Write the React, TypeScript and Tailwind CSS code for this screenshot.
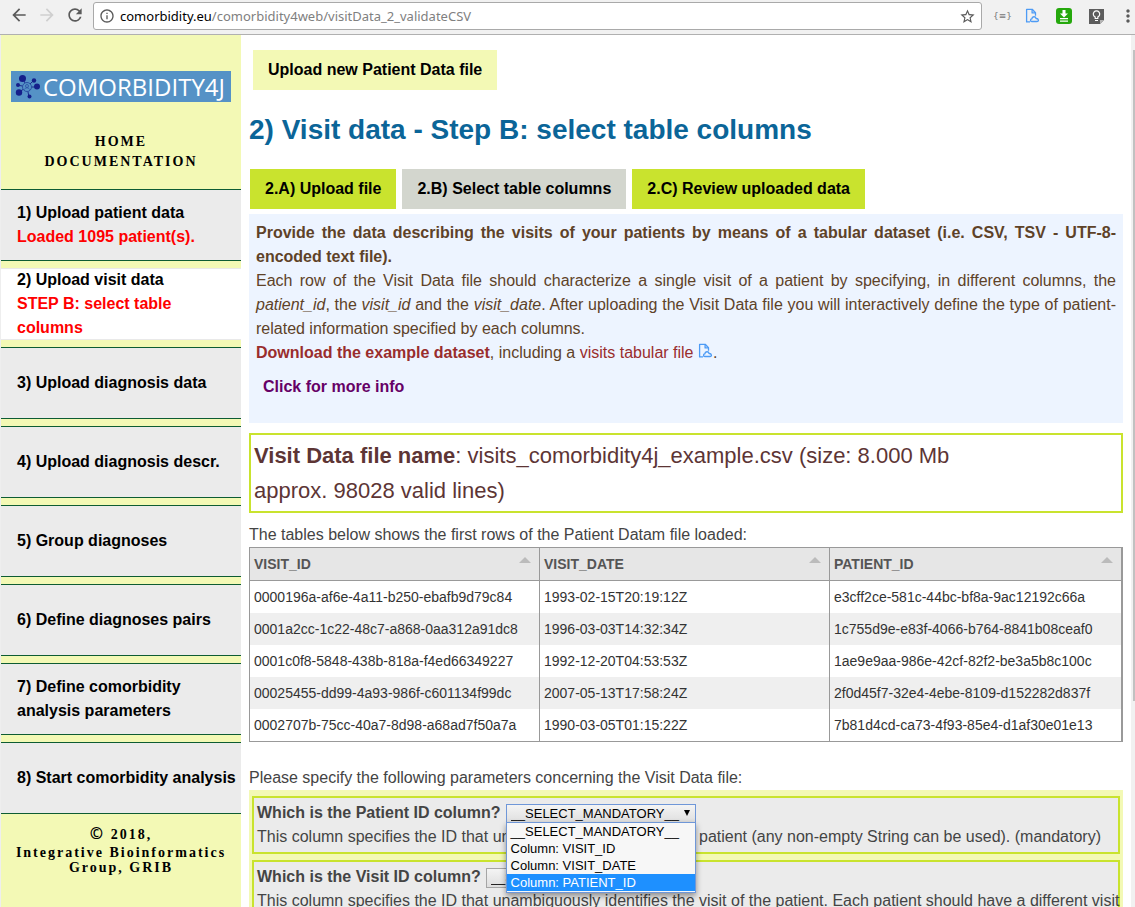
import React from "react";
import {
  MdArrowBack,
  MdArrowForward,
  MdInfoOutline,
  MdMoreVert,
  MdRefresh,
  MdStarBorder,
} from "react-icons/md";

const steps = [
  { title: "1) Upload patient data", status: "Loaded 1095 patient(s)." },
  { title: "2) Upload visit data", status: "STEP B: select table columns", active: true },
  { title: "3) Upload diagnosis data" },
  { title: "4) Upload diagnosis descr." },
  { title: "5) Group diagnoses" },
  { title: "6) Define diagnoses pairs" },
  { title: "7) Define comorbidity analysis parameters" },
  { title: "8) Start comorbidity analysis" },
];

const columns = ["VISIT_ID", "VISIT_DATE", "PATIENT_ID"];

const rows = [
  ["0000196a-af6e-4a11-b250-ebafb9d79c84", "1993-02-15T20:19:12Z", "e3cff2ce-581c-44bc-bf8a-9ac12192c66a"],
  ["0001a2cc-1c22-48c7-a868-0aa312a91dc8", "1996-03-03T14:32:34Z", "1c755d9e-e83f-4066-b764-8841b08ceaf0"],
  ["0001c0f8-5848-438b-818a-f4ed66349227", "1992-12-20T04:53:53Z", "1ae9e9aa-986e-42cf-82f2-be3a5b8c100c"],
  ["00025455-dd99-4a93-986f-c601134f99dc", "2007-05-13T17:58:24Z", "2f0d45f7-32e4-4ebe-8109-d152282d837f"],
  ["0002707b-75cc-40a7-8d98-a68ad7f50a7a", "1990-03-05T01:15:22Z", "7b81d4cd-ca73-4f93-85e4-d1af30e01e13"],
];

const options = ["__SELECT_MANDATORY__", "Column: VISIT_ID", "Column: VISIT_DATE", "Column: PATIENT_ID"];

function FileCloudIcon({ className }: { className: string }) {
  return (
    <svg viewBox="0 0 15 16" className={className} fill="none" stroke="#4d9bf5" strokeWidth="1.3" strokeLinejoin="round" aria-hidden="true">
      <path d="M5 13.900H1.600V1.300h5.600l3.300 3.400v3" />
      <path d="M7.100 1.500v3.400h3.300" />
      <path d="M6.800 13.500a1.300 1.300 0 0 1 0-2.600c.300-2.800 3.800-2.800 4.300-.400 2.900.200 3 3 .900 3z" />
    </svg>
  );
}

function MoleculeIcon() {
  return (
    <svg viewBox="0 0 26 26" className="h-[26px] w-[26px] shrink-0" aria-hidden="true">
      <g stroke="#1b2d8c" strokeWidth="1">
        <path d="M12 13 8 5M12 13l6-6M12 13l12 0M12 13 14 23M12 13 4 18M12 13 2.500 11" />
      </g>
      <circle cx="12" cy="13" r="4.500" fill="#5592c6" stroke="#2a4fa3" />
      <circle cx="12" cy="12" r="1.500" fill="none" stroke="#2a4fa3" strokeWidth="0.800" />
      <path d="M9.500 15.500c.5-2.200 4.500-2.200 5 0" fill="none" stroke="#2a4fa3" strokeWidth="0.800" />
      <g fill="#151f8a">
        <circle cx="7.500" cy="4.500" r="3.500" />
        <circle cx="19" cy="6.500" r="2.200" />
        <circle cx="22" cy="12.500" r="3" />
        <circle cx="14.500" cy="22.500" r="2" />
        <circle cx="4" cy="18.500" r="3.200" />
        <circle cx="3" cy="11" r="2" />
      </g>
    </svg>
  );
}

function BrowserBar() {
  return (
    <header className="flex h-[35px] shrink-0 items-center border-b border-[#b0b0b0] bg-[#f1f1f1] pl-[9px] text-[#5a5a5a]">
      <button aria-label="Back" className="mr-2 pb-1"><MdArrowBack size={20} /></button>
      <button aria-label="Forward" className="mr-2 pb-1 text-[#cfcfcf]"><MdArrowForward size={20} /></button>
      <button aria-label="Reload" className="mr-2 pb-1"><MdRefresh size={20} /></button>
      <div className="mb-[3px] mt-[1px] flex h-7 flex-1 items-center rounded-[3px] border border-[#a9a9a9] bg-white pl-[5px] pr-[5px]">
        <MdInfoOutline size={16} />
        <label htmlFor="address" className="relative ml-[5px] flex-1 font-['Noto_Sans',sans-serif] text-[13px] leading-5 text-[#808080]">
          <span className="text-black">comorbidity.eu</span>/comorbidity4web/visitData_2_validateCSV
          <input id="address" aria-label="Address" className="absolute inset-0 bg-transparent outline-none" />
        </label>
        <button aria-label="Bookmark"><MdStarBorder size={17} /></button>
      </div>
      <div className="flex w-[153px] shrink-0 items-center overflow-hidden pb-[2px] pl-[11px]">
        <span className="w-[14px] shrink-0 font-['DejaVu_Sans',sans-serif] text-[9px] leading-4 text-[#777777]">{"{≡}"}</span>
        <FileCloudIcon className="ml-[18px] h-4 w-[15px] shrink-0" />
        <svg viewBox="0 0 16 16" className="ml-4 h-4 w-4 shrink-0" aria-hidden="true">
          <rect width="16" height="16" rx="3" fill="#25a80c" />
          <path d="M6.500 2h3v3.500H12l-4 4-4-4h2.500z" fill="#fff" />
          <path d="M4 10.700h8M4 13.200h8" stroke="#fff" strokeWidth="1.300" />
        </svg>
        <svg viewBox="0 0 15 15" className="ml-[17px] h-[15px] w-[15px] shrink-0" aria-hidden="true">
          <path d="M0 0h15v11l-4 4H0z" fill="#5d5d5d" />
          <path d="M11 15v-4h4z" fill="#b5b5b5" />
          <path d="M6.200 9.500V8a3.200 3.200 0 1 1 2.600 0v1.500zM6 11.500h3" fill="none" stroke="#fff" strokeWidth="1.200" />
        </svg>
        <MdMoreVert size={20} className="ml-[14px] shrink-0" />
      </div>
    </header>
  );
}

function Sidebar() {
  return (
    <aside className="w-60 shrink-0 bg-[#f3f9b5] text-black">
      <a href="#home" className="mx-[10px] mt-9 flex h-[31px] items-center bg-[#5592c6] pl-1 text-white">
        <MoleculeIcon />
        <span className="ml-[2px] whitespace-nowrap font-['Open_Sans',sans-serif] text-[24px] font-medium leading-[31px]">COMORBIDITY4J</span>
      </a>
      <div className="mt-[30px] flex flex-col items-center font-['Liberation_Serif',serif] text-[14px] font-bold leading-5 tracking-[2px]">
        <a href="#home">HOME</a>
        <a href="#documentation">DOCUMENTATION</a>
      </div>
      <nav className="mt-[17px] flex flex-col gap-[7px]">
        {steps.map((step) => (
          <a
            key={step.title}
            href="#step"
            className={
              "flex h-[72px] flex-col justify-center border-y pl-4 text-[16px] font-bold leading-6 " +
              (step.active ? "border-[#e9e9e9] bg-white" : "border-[#0d5c33] bg-[#ebebeb]")
            }
          >
            <span>{step.title}</span>
            {step.status && <span className="pr-10 text-[#ff0000]">{step.status}</span>}
          </a>
        ))}
      </nav>
      <footer className="mt-[9px] text-center font-['Liberation_Serif',serif] text-[14px] font-bold leading-[15px] tracking-[2px]">
        <p className="mb-px h-[21px] leading-[21px]">
          <span className="font-['Open_Sans',sans-serif] text-[16px]">©</span> 2018,
        </p>
        <p>Integrative Bioinformatics Group, GRIB</p>
      </footer>
    </aside>
  );
}

function ColumnSelect({ id, open }: { id: string; open?: boolean }) {
  return (
    <span className="relative ml-[5px] inline-block align-top">
      <select
        id={id}
        className={
          "mt-[3px] block h-5 w-[190px] appearance-none border bg-linear-to-b from-[#f4f4f4] to-[#dedede] pl-1 text-[13px] font-normal leading-4 text-black outline-none " +
          (open ? "border-[#6f97d8]" : "border-[#a5a5a5]")
        }
      >
        {options.map((o) => <option key={o}>{o}</option>)}
      </select>
      <span className="pointer-events-none absolute right-[6px] top-[9px] border-x-[3px] border-t-[6px] border-x-transparent border-t-black" />
      {open && (
        <ul role="listbox" aria-label="Patient ID column" className="absolute left-0 top-[21px] z-10 w-full border border-[#6f97d8] bg-[#f7f7f7] pb-px text-[13px] font-normal leading-[17px] text-black shadow-[0_3px_6px_rgba(0,0,0,0.4)]">
          {options.map((o, i) => (
            <li key={o} role="option" aria-selected={i === 3} className={"pl-1 " + (i === 3 ? "bg-[#1e90ff] text-white" : "")}>{o}</li>
          ))}
        </ul>
      )}
    </span>
  );
}

function Parameter({ id, label, text, open }: { id: string; label: string; text: string; open?: boolean }) {
  return (
    <div className="border-2 border-[#c9e32e] bg-[#ebebeb] p-[3px]">
      <div className="h-6 font-bold">
        <label htmlFor={id}>{label}</label>
        <ColumnSelect id={id} open={open} />
      </div>
      <p className="-mr-2">{text}</p>
    </div>
  );
}

function Main() {
  return (
    <main className="min-w-0 flex-1 pl-2 pr-2 text-[16px] leading-6 text-[#444444]">
      <button className="ml-1 mt-[15px] block h-10 bg-[#f3f9b5] px-[15px] font-bold text-black">Upload new Patient Data file</button>
      <h1 className="mt-5 text-[28px] font-bold leading-10 text-[#0b6598]">2) Visit data - Step B: select table columns</h1>
      <div className="mt-[19px] flex gap-[6px] pl-px font-bold text-black">
        <button className="h-10 bg-[#c9e32e] px-[15px]">2.A) Upload file</button>
        <button className="h-10 bg-[#d3d6ce] px-[15px]">2.B) Select table columns</button>
        <button className="h-10 bg-[#c9e32e] px-[15px]">2.C) Review uploaded data</button>
      </div>
      <section className="mt-[5px] bg-[#edf4ff] px-[7px] pb-6 pt-[7px] text-justify text-[#5e4228]">
        <p className="font-bold">
          Provide the data describing the visits of your patients by means of a tabular dataset (i.e. CSV, TSV - UTF-8-encoded text file).
        </p>
        <p>
          Each row of the Visit Data file should characterize a single visit of a patient by specifying, in different columns, the{" "}
          <i>patient_id</i>, the <i>visit_id</i> and the <i>visit_date</i>. After uploading the Visit Data file you will interactively
          define the type of patient-related information specified by each columns.
        </p>
        <p>
          <a href="#dataset" className="font-bold text-[#992d2d]">Download the example dataset</a>, including a{" "}
          <a href="#visits" className="text-[#992d2d]">
            visits tabular file <FileCloudIcon className="inline-block h-4 w-[15px] align-[-1px]" />
          </a>.
        </p>
        <button className="ml-[7px] mt-[10px] block h-6 font-bold text-[#660066]">Click for more info</button>
      </section>
      <section className="mt-[10px] border-2 border-[#c9e32e] px-[3px] py-[3px] text-[22px] leading-[35px] text-[#5d3535]">
        <b>Visit Data file name</b>: visits_comorbidity4j_example.csv (size: 8.000 Mb
        <br />
        approx. 98028 valid lines)
      </section>
      <p className="mt-[10px]">The tables below shows the first rows of the Patient Datam file loaded:</p>
      <table className="w-full table-fixed border-separate border-spacing-0 border border-r-2 border-[#999999] text-[14px] leading-4 text-[#333333]">
        <colgroup>
          <col className="w-[290px]" />
          <col className="w-[290px]" />
          <col />
        </colgroup>
        <thead>
          <tr className="bg-[#e6e6e6] text-[#555555]">
            {columns.map((c) => (
              <th key={c} className="h-[33px] border-b border-r border-[#999999] px-1 py-0 text-left font-bold last:border-r-0">
                <div className="flex items-start justify-between">
                  {c}
                  <span className="mr-1 mt-px border-x-[6px] border-b-[6px] border-x-transparent border-b-[#bbbbbb]" />
                </div>
              </th>
            ))}
          </tr>
        </thead>
        <tbody>
          {rows.map((row) => (
            <tr key={row[0]} className="bg-white even:bg-[#efefef]">
              {row.map((cell) => (
                <td key={cell} className="h-8 whitespace-nowrap border-r border-[#999999] px-1 py-0 last:border-r-0">{cell}</td>
              ))}
            </tr>
          ))}
        </tbody>
      </table>
      <p className="mt-6">Please specify the following parameters concerning the Visit Data file:</p>
      <form className="flex flex-col gap-[6px] bg-[#f3f9b5] px-[3px] pb-10 pt-[6px]">
        <Parameter
          id="patient-column"
          open
          label="Which is the Patient ID column?"
          text="This column specifies the ID that unambiguously identifies the patient (any non-empty String can be used). (mandatory)"
        />
        <Parameter
          id="visit-column"
          label="Which is the Visit ID column?"
          text="This column specifies the ID that unambiguously identifies the visit of the patient. Each patient should have a different visit ID for each visit. (mandatory)"
        />
      </form>
    </main>
  );
}

export default function App() {
  return (
    <div className="flex h-screen flex-col overflow-hidden bg-white font-['Liberation_Sans',Arial,sans-serif]">
      <BrowserBar />
      <div className="flex min-h-0 flex-1 overflow-hidden border-l border-[#eeeeee]">
        <Sidebar />
        <Main />
        <div className="w-1 shrink-0 bg-[#f1f1f1] pl-[2px] pt-[15px]">
          <div className="h-[76%] bg-[#c1c1c1]" />
        </div>
      </div>
    </div>
  );
}
